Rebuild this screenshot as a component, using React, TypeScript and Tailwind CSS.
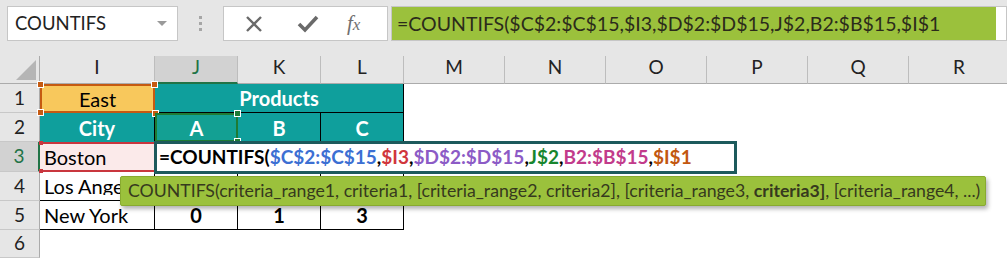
import React from "react";

const font = { fontFamily: "Lato, 'Open Sans', sans-serif" };

function Corner({ pos, color }: { pos: string; color: string }) {
  return <span className={`absolute w-[7px] h-[7px] border border-white ${pos} ${color}`} />;
}

function ColHead({ label, active }: { label: string; active?: boolean }) {
  return (
    <div
      className={
        active
          ? "flex items-end justify-center pb-[1px] bg-[#d2d2d2] border-r border-[#bdbdbd] border-b-2 border-b-[#217346] text-[#217346] text-[19px]"
          : "flex items-end justify-center pb-[2px] bg-[#e6e6e6] border-r border-[#bdbdbd] border-b border-b-[#ababab] text-[#222] text-[19px]"
      }
    >
      {label}
    </div>
  );
}

function RowHead({ n, active }: { n: number; active?: boolean }) {
  return (
    <div
      className={
        active
          ? "flex items-center justify-center bg-[#d2d2d2] border-b border-[#c8c8c8] border-r-2 border-r-[#217346] text-[#217346] text-[19px]"
          : "flex items-center justify-center bg-[#e6e6e6] border-b border-[#c8c8c8] border-r border-r-[#ababab] text-[#222] text-[19px]"
      }
    >
      {n}
    </div>
  );
}

export default function App() {
  return (
    <div className="w-[1007px] h-[258px] overflow-hidden bg-white relative select-none" style={font}>
      {/* Top bar */}
      <div className="h-[56px] bg-[#e6e6e6] flex items-start pt-[6px] pl-[7px]">
        <div className="w-[171px] h-[35px] bg-white border border-[#c6c6c6] flex items-center justify-between pl-[7px] pr-[10px]">
          <span className="text-[18.5px] text-[#222]">COUNTIFS</span>
          <svg width="10" height="6" viewBox="0 0 10 6">
            <path d="M0 0 L10 0 L5 5 Z" fill="#9a9a9a" />
          </svg>
        </div>
        <div className="w-[45px] h-[35px] flex flex-col items-center justify-center gap-[3px]">
          <span className="w-[3px] h-[3px] bg-[#a6a6a6]" />
          <span className="w-[3px] h-[3px] bg-[#a6a6a6]" />
          <span className="w-[3px] h-[3px] bg-[#a6a6a6]" />
        </div>
        <div className="w-[165px] h-[35px] bg-white border border-[#c6c6c6] flex items-center">
          <svg className="ml-[20px]" width="20" height="20" viewBox="0 0 20 20">
            <path d="M3 3 L17 17 M17 3 L3 17" stroke="#6a6a6a" strokeWidth="2.4" />
          </svg>
          <svg className="ml-[33px]" width="22" height="20" viewBox="0 0 22 20">
            <path d="M2 10 L8 16 L20 3" stroke="#6a6a6a" strokeWidth="3.6" fill="none" />
          </svg>
          <span
            className="ml-[28px] text-[21px] italic text-[#707070]"
            style={{ fontFamily: "'Liberation Serif', 'DejaVu Serif', serif" }}
          >
            f<span className="text-[17px]">x</span>
          </span>
        </div>
        <div className="ml-[3px] flex-1 h-[35px] bg-white border border-[#c6c6c6] flex">
          <div className="w-[604px] h-full bg-[#9bc13c] flex items-center pl-[5px] text-[19.5px] text-[#2b2b1b] whitespace-nowrap">
            =COUNTIFS($C$2:$C$15,$I3,$D$2:$D$15,J$2,B2:$B$15,$I$1
          </div>
        </div>
      </div>

      {/* Sheet grid */}
      <div className="grid grid-cols-[40px_115px_83px_83px_83px_101px_101px_101px_101px_101px_101px] grid-rows-[28px_29px_29px_30px_29px_29px_28px] text-[20px] text-black">
        {/* header row */}
        <div className="bg-[#e6e6e6] border-r border-[#ababab] border-b border-b-[#ababab] flex items-end justify-end p-[3px]">
          <svg width="20" height="20" viewBox="0 0 20 20">
            <path d="M20 0 L20 20 L0 20 Z" fill="#b5b5b5" />
          </svg>
        </div>
        <ColHead label="I" />
        <ColHead label="J" active />
        <ColHead label="K" />
        <ColHead label="L" />
        <ColHead label="M" />
        <ColHead label="N" />
        <ColHead label="O" />
        <ColHead label="P" />
        <ColHead label="Q" />
        <ColHead label="R" />

        {/* Row 1 */}
        <RowHead n={1} />
        <div className="relative bg-[#f8c85c] flex items-center justify-center">
          East
          <span className="absolute inset-0 border-2 border-[#c55a11]" />
          <Corner pos="-left-[3px] -top-[3px]" color="bg-[#c55a11]" />
          <Corner pos="-right-[3px] -top-[3px]" color="bg-[#c55a11]" />
          <Corner pos="-left-[3px] -bottom-[3px]" color="bg-[#c55a11]" />
          <Corner pos="-right-[4px] -bottom-[4px]" color="bg-[#c55a11]" />
        </div>
        <div className="col-span-3 bg-[#0f9f9c] text-white font-bold flex items-center justify-center border-r border-b border-black">
          Products
        </div>
        <div className="col-span-6" />

        {/* Row 2 */}
        <RowHead n={2} />
        <div className="bg-[#0f9f9c] text-white font-bold flex items-center justify-center border-r border-black">
          City
        </div>
        <div className="relative bg-[#13a093] text-white font-bold flex items-center justify-center">
          A
          <span className="absolute inset-0 border-2 border-[#1e7b34]" />
          <Corner pos="-right-[3px] -top-[3px]" color="bg-[#1e7b34]" />
          <Corner pos="-right-[3px] -bottom-[3px]" color="bg-[#1e7b34]" />
        </div>
        <div className="bg-[#0f9f9c] text-white font-bold flex items-center justify-center border-r border-black">
          B
        </div>
        <div className="bg-[#0f9f9c] text-white font-bold flex items-center justify-center border-r border-black">
          C
        </div>
        <div className="col-span-6" />

        {/* Row 3 */}
        <RowHead n={3} active />
        <div className="relative bg-[#fbeaea] flex items-center pl-[4px] border-t-2 border-b-2 border-[#c9363e]">
          Boston
          <span className="absolute -left-[1px] -top-[3px] w-[4px] h-[4px] bg-[#c9363e]" />
          <span className="absolute -left-[1px] -bottom-[3px] w-[4px] h-[4px] bg-[#c9363e]" />
        </div>
        <div className="border-r border-b border-black" />
        <div className="border-r border-b border-black" />
        <div className="border-r border-b border-black" />
        <div className="col-span-6" />

        {/* Row 4 */}
        <RowHead n={4} />
        <div className="flex items-start pt-[1px] pl-[4px] border-r border-b border-black whitespace-nowrap">
          <span className="w-[76px] h-[22px] overflow-hidden leading-[26px]">Los Angeles</span>
        </div>
        <div className="border-r border-b border-black" />
        <div className="border-r border-b border-black" />
        <div className="border-r border-b border-black" />
        <div className="col-span-6" />

        {/* Row 5 */}
        <RowHead n={5} />
        <div className="flex items-center pl-[4px] border-r border-b border-black whitespace-nowrap">New York</div>
        <div className="flex items-center justify-center font-bold border-r border-b border-black">0</div>
        <div className="flex items-center justify-center font-bold border-r border-b border-black">1</div>
        <div className="flex items-center justify-center font-bold border-r border-b border-black">3</div>
        <div className="col-span-6" />

        {/* Row 6 */}
        <RowHead n={6} />
        <div className="col-span-10" />
      </div>

      {/* In-cell edit box */}
      <div className="absolute left-[154px] top-[141px] w-[583px] h-[33px] bg-white border-[3px] border-[#1d5a5c] flex items-center pl-[2px] text-[19px] font-bold whitespace-nowrap">
        <span className="text-black">=COUNTIFS(</span>
        <span className="text-[#3c6fd3]">$C$2:$C$15</span>
        <span className="text-black">,</span>
        <span className="text-[#d0363c]">$I3</span>
        <span className="text-black">,</span>
        <span className="text-[#8c5bc6]">$D$2:$D$15</span>
        <span className="text-black">,</span>
        <span className="text-[#18862e]">J$2</span>
        <span className="text-black">,</span>
        <span className="text-[#c23b8b]">B2:$B$15</span>
        <span className="text-black">,</span>
        <span className="text-[#c2570f]">$I$1</span>
      </div>

      {/* Tooltip */}
      <div className="absolute left-[120px] top-[176px] w-[866px] h-[30px] bg-[#9bc13c] border border-[#88aa30] rounded-[2px] shadow-[2px_3px_4px_rgba(0,0,0,0.3)] flex items-center pl-[7px] text-[17.7px] text-[#36391e] whitespace-nowrap">
        COUNTIFS(criteria_range1, criteria1, [criteria_range2, criteria2], [criteria_range3,&nbsp;
        <b className="font-bold">criteria3]</b>, [criteria_range4, ...)
      </div>
    </div>
  );
}
